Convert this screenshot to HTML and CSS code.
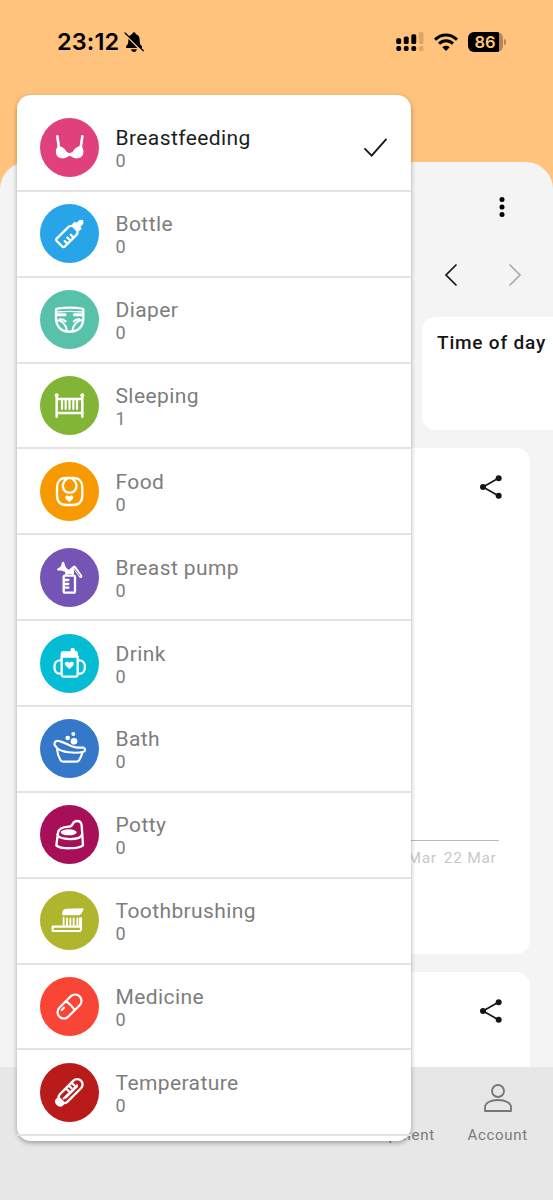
FILE: index.html
```
<!DOCTYPE html>
<html lang="en">
<head>
<meta charset="utf-8">
<title>Statistics</title>
<link rel="stylesheet" href="styles.css">
</head>
<body>
<div class="screen">
  <header class="status">
    <div class="status-left">
      <span class="clock">23:12</span>
      <svg class="bell" viewBox="0 0 60 60"><path fill="#000" d="M30 1c4 0 5 3 5 5 9 3 12 10 12 18 0 12 3 15 7 19v5H6v-5c4-4 7-7 7-19 0-8 3-15 12-18 0-2 1-5 5-5zM21 52h18c-1 5-5 8-9 8s-8-3-9-8z"/><path d="M-1 3 57 61" stroke="#ffc37e" stroke-width="5"/><path d="M3 3 58 56" stroke="#000" stroke-width="4" stroke-linecap="round"/></svg>
    </div>
    <div class="status-right">
      <svg class="signal" viewBox="0 0 84 58"><rect y="19" width="15" height="18" rx="5"/><rect x="23" y="14" width="15" height="23" rx="5"/><rect x="46" y="7" width="15" height="30" rx="5"/><rect y="43" width="15" height="15" rx="6"/><rect x="23" y="43" width="15" height="15" rx="6"/><rect x="46" y="43" width="15" height="15" rx="6"/><g fill="#d9a66b"><rect x="69" width="14" height="37" rx="4"/><rect x="69" y="43" width="14" height="15" rx="5"/></g></svg>
      <svg class="wifi" viewBox="0 0 72 54"><g fill="none" stroke="#000" stroke-width="9"><path d="M3 20C22 1 50 1 69 20"/><path d="M15 32c12-12 30-12 42 0"/></g><path d="M25 43c6-6 16-6 22 0L36 54z"/></svg>
      <div class="battery"><span>86</span></div><i class="battery-tip"></i>
    </div>
  </header>

  <main class="sheet">
    <div class="more"><svg viewBox="0 0 6 20"><circle cx="3" cy="2.5" r="2.5"/><circle cx="3" cy="10" r="2.5"/><circle cx="3" cy="17.5" r="2.5"/></svg></div>
    <div class="pager">
      <svg viewBox="0 0 12 22"><path d="M11 1 1 11l10 10"/></svg>
      <svg class="off" viewBox="0 0 12 22"><path d="m1 1 10 10L1 21"/></svg>
    </div>
    <div class="tabs"><div class="tab">Time of day</div></div>
    <section class="card chart">
      <svg class="share" viewBox="0 0 66 70"><path d="M55 9 9 35l46 26" fill="none" stroke="#151515" stroke-width="5"/><circle cx="56" cy="9" r="9"/><circle cx="9" cy="35" r="9"/><circle cx="56" cy="61" r="9"/></svg>
      <div class="axis"><span>21 Mar</span><span>22 Mar</span></div>
    </section>
    <section class="card next">
      <svg class="share" viewBox="0 0 66 70"><path d="M55 9 9 35l46 26" fill="none" stroke="#151515" stroke-width="5"/><circle cx="56" cy="9" r="9"/><circle cx="9" cy="35" r="9"/><circle cx="56" cy="61" r="9"/></svg>
    </section>
  </main>

  <nav class="nav">
    <div class="nav-item">Development</div>
    <div class="nav-item"><svg viewBox="0 0 84 84"><circle cx="42" cy="21" r="18"/><path d="M3 81V70c0-13 16-22 39-22s39 9 39 22v11z"/></svg>Account</div>
  </nav>

  <div class="menu">
    <div class="row selected">
      <svg class="icon pink" viewBox="0 0 177 177"><path d="M52 55l5 35M127 55l-5 35" stroke-width="8"/><path class="f" d="M54 84c16 0 21 12 28 19 4 3 10 3 14 0 7-7 12-19 28-19 11 12 8 35-10 37-14 2-18-7-25-7s-11 9-25 7c-18-2-21-25-10-37z"/></svg>
      <div class="label"><b>Breastfeeding</b><span>0</span></div>
      <svg class="check" viewBox="0 0 24 20"><path d="m1 11 7 7L23 1"/></svg>
    </div>
    <div class="row">
      <svg class="icon blue" viewBox="0 0 177 177"><g transform="translate(84 94) rotate(45)" stroke-width="7"><path d="M-17 30v-48q0-8 8-12H9q8 4 8 12v48q0 6-6 6h-22q-6 0-6-6zM17-7H5M17 6H3M17 19H5"/><path class="f" d="M-15-44h30v12h-30zM-9-43l1-9q-2-5 2-7l1-2q5-5 10 0l1 2q4 2 2 7l1 9z"/></g></svg>
      <div class="label"><b>Bottle</b><span>0</span></div>
    </div>
    <div class="row">
      <svg class="icon teal" viewBox="0 0 177 177"><path d="M48 59q0-3 4-3 37-6 74 0 4 0 4 3v25c0 26-16 41-41 41S48 110 48 84z" stroke-width="7"/><path d="M50 66q39-4 78 0" stroke-width="4"/><path d="M54 74h21M103 74h21" stroke-width="9"/><path d="M50 90c16 1 27 13 31 32M128 90c-16 1-27 13-31 32M60 88c7-1 13 2 17 6M118 88c-7-1-13 2-17 6" stroke-width="6"/></svg>
      <div class="label"><b>Diaper</b><span>0</span></div>
    </div>
    <div class="row">
      <svg class="icon green" viewBox="0 0 177 177"><path d="M50 58v64M127 58v64M50 69h77M50 111h77" stroke-width="7.500"/><path d="M66 69v30M77 69v30M88.500 69v30M100 69v30M111 69v30" stroke-width="6.500"/><circle class="f" cx="50" cy="58" r="6"/><circle class="f" cx="127" cy="58" r="6"/></svg>
      <div class="label"><b>Sleeping</b><span>1</span></div>
    </div>
    <div class="row">
      <svg class="icon orange" viewBox="0 0 177 177"><path d="M77 48h24c17 0 26 12 26 28v23c0 19-9 30-28 30H79c-19 0-28-11-28-30V76c0-16 9-28 26-28zM82 50c-10 7-14 18-13 25 2 12 9 17 20 17s18-5 20-17c1-7-3-18-13-25" stroke-width="7"/><path class="f" d="M88 121 77 110c-5-9 7-13 11-6 4-7 16-3 11 6z"/></svg>
      <div class="label"><b>Food</b><span>0</span></div>
    </div>
    <div class="row">
      <svg class="icon purple" viewBox="0 0 177 177"><path d="M75 83h26q4 0 4 5v41q0 5-4 5H75q-4 0-4-5V88q0-5 4-5zM72 96h13M72 108h13M72 119h13M79 82V70h19v12" stroke-width="7"/><path class="f" d="M65 44c3-4 7-3 8 0 2 12 7 18 15 22h14v12H78V73c-8-4-16-6-23-5-5-1-4-5-1-7 9-4 11-9 11-17z"/><path d="M89 70 103 58 122 85" stroke-width="10"/><path d="M104 62l16 22" stroke="#7455b5" stroke-width="2.500"/></svg>
      <div class="label"><b>Breast pump</b><span>0</span></div>
    </div>
    <div class="row">
      <svg class="icon cyan" viewBox="0 0 177 177"><path d="M65 68h48v53q0 7-7 7H72q-7 0-7-7zM63 79h-4c-21 0-21 40 0 40h4M115 79h4c21 0 21 40 0 40h-4" stroke-width="7"/><path class="f" d="M62 68V58q0-6 6-6h23l2-9 9-2 3 9q9 1 9 8v10z"/><path class="f" d="M88 106 76 94c-6-10 7-14 12-7 5-7 18-3 12 7z"/></svg>
      <div class="label"><b>Drink</b><span>0</span></div>
    </div>
    <div class="row">
      <svg class="icon azure" viewBox="0 0 177 177"><path d="M44 72c2-6 9-7 16-5 17 3 33 18 53 19h18c6 2 5 10 0 12-23 7-68 2-81-12-4-5-9-9-6-14zM51 90c1 14 6 26 11 34 2 3 4 4 8 4h39c4 0 6-1 8-4 5-8 8-15 10-23" stroke-width="6.500"/><circle class="f" cx="100" cy="45" r="6"/><circle class="f" cx="83" cy="57" r="7"/><circle class="f" cx="102" cy="67" r="10"/></svg>
      <div class="label"><b>Bath</b><span>0</span></div>
    </div>
    <div class="row">
      <svg class="icon berry" viewBox="0 0 177 177"><path d="M49 121 54 83c2-11 16-17 32-18 8 0 10-3 12-8 3-6 7-9 13-9 8 0 13 5 14 13l4 60c-12 11-68 12-80 0zM52 89c6 17 69 18 74 0" stroke-width="7"/><ellipse class="f" cx="86" cy="82" rx="24" ry="9"/></svg>
      <div class="label"><b>Potty</b><span>0</span></div>
    </div>
    <div class="row">
      <svg class="icon olive" viewBox="0 0 177 177"><path d="M38 107h82V82h3v32q0 6-6 6H38z" stroke-width="6.500"/><path d="M71 80v26M81 82v22M91 82v22M101 82v22M112 82v22" stroke-width="5.500"/><path class="f" d="M67 72c-1-9 2-19 12-19l49-1c4 0 4 3 2 5-5 8-6 16-15 16H68z"/></svg>
      <div class="label"><b>Toothbrushing</b><span>0</span></div>
    </div>
    <div class="row">
      <svg class="icon red" viewBox="0 0 177 177"><g transform="translate(88.500 88.500) rotate(45)" stroke-width="6.500"><rect x="-19" y="-43" width="38" height="86" rx="19"/><path d="M-19-2c9-5 29-5 38 0M-9 14v10"/></g></svg>
      <div class="label"><b>Medicine</b><span>0</span></div>
    </div>
    <div class="row">
      <svg class="icon dark" viewBox="0 0 177 177"><g transform="translate(89 87) rotate(45)" stroke-width="7"><path d="M-16 26v-58a16 16 0 0 1 32 0v58q0 7-7 12H-9q-7-5-7-12zM-15-24h10M-15-12h10M-15 0h10"/><path d="M1 27V-30M4-27v47" stroke-width="6"/><path class="f" d="M-11 32h22c8 12 2 23-11 23s-19-11-11-23z"/></g></svg>
      <div class="label"><b>Temperature</b><span>0</span></div>
    </div>
  </div>
</div>
</body>
</html>
```
FILE: styles.css
```
* { box-sizing: border-box; }
body { margin: 0; font-family: Roboto, sans-serif; }
.screen { position: relative; width: 553px; height: 1200px; overflow: hidden; background: #ffc37e; display: flex; flex-direction: column; }
svg { display: block; flex: none; overflow: visible; }

.status { height: 162px; flex: none; padding: 27px 47px 0 57px; display: flex; justify-content: space-between; align-items: flex-start; }
.status-left, .status-right { display: flex; align-items: center; height: 29px; }
.clock { font: 600 23.500px/29px Inter, sans-serif; width: 67px; letter-spacing: 0.1px; }
.bell { width: 20px; height: 20px; }
.signal { width: 28px; height: 19px; margin-right: 10px; }
.wifi { width: 24px; height: 18px; margin-right: 10px; }
.battery { width: 35px; height: 20px; border-radius: 6px; background: linear-gradient(90deg, #000 30.500px, #b18758 30.500px); color: #ffc37e; font: 600 16.500px/20px Inter, sans-serif; padding-left: 6.500px; }
.battery-tip { width: 2px; height: 6px; margin-left: 1px; border-radius: 0 3px 3px 0; background: #b18758; }

.sheet { flex: none; height: 905px; border-radius: 27px 27px 0 0; background: #f4f4f4; overflow: hidden; display: flex; flex-direction: column; }
.more { flex: none; height: 91px; padding: 35px 48px 0 0; display: flex; justify-content: flex-end; }
.more svg { width: 6px; height: 20px; }
.pager { flex: none; height: 64px; padding: 11px 32px 0 0; display: flex; justify-content: flex-end; gap: 52px; }
.pager svg { width: 12px; height: 22px; fill: none; stroke: #151515; stroke-width: 1.700; stroke-linecap: round; }
.pager .off { stroke: #aaa; }
.tabs { flex: none; padding-left: 422px; width: 700px; }
.tab { height: 113px; border-radius: 14px; background: #fff; padding: 14px 0 0 15px; font-size: 19px; font-weight: 500; line-height: 24px; letter-spacing: 0.8px; color: #151515; }
.card { width: 513px; margin: 18px 0 0 17px; background: #fff; border-radius: 14px; flex: none; display: flex; flex-direction: column; align-items: flex-end; }
.chart { height: 506px; }
.next { height: 150px; }
.share { width: 22px; height: 24px; margin: 27px 28px 0 0; fill: #151515; }
.axis { width: 430px; margin: 341px 31px 0 0; border-top: 1px solid #b8b8b8; padding: 7px 2.500px 0 0; display: flex; justify-content: flex-end; gap: 7px; font-size: 15.500px; line-height: 20px; letter-spacing: 0.7px; color: #c9c9c9; }

.nav { flex: none; height: 133px; background: #e7e7e7; display: flex; justify-content: flex-end; }
.nav-item { width: 110.600px; height: 78px; display: flex; flex-direction: column; align-items: center; justify-content: flex-end; font-size: 15px; line-height: 20px; letter-spacing: 0.7px; color: #7b7b7b; }
.nav-item svg { width: 28px; height: 28px; margin-bottom: 13px; fill: none; stroke: #777; stroke-width: 5.500; stroke-linejoin: round; }

.menu { position: absolute; left: 17px; top: 95px; width: 394px; height: 1046px; padding-top: 11px; border-radius: 14px; background: #fff; box-shadow: 0 2px 5px rgba(0,0,0,.32); }
.row { height: 85.860px; border-bottom: 2px solid #e4e4e4; padding: 0 24px 0 22.500px; display: flex; align-items: center; }
.icon { width: 59px; height: 59px; border-radius: 50%; margin-right: 17px; fill: none; stroke: #fff; stroke-linecap: round; stroke-linejoin: round; }
.icon .f { fill: #fff; stroke: none; }
.label { flex: 1; display: flex; flex-direction: column; padding-top: 3px; color: #7d7d7d; }
.label b { font-weight: 400; font-size: 21px; line-height: 24px; letter-spacing: 0.4px; }
.label span { font-size: 18px; line-height: 22px; }
.selected b { color: #1d1d1d; }
.check { width: 23px; height: 20px; margin-top: 1px; fill: none; stroke: #151515; stroke-width: 1.900; stroke-linecap: round; }
.pink { background: #e0407c; }
.blue { background: #27a5e8; }
.teal { background: #57c1aa; }
.green { background: #82b436; }
.orange { background: #f79a00; }
.purple { background: #7455b5; }
.cyan { background: #05bcd5; }
.azure { background: #3577c8; }
.berry { background: #a71059; }
.olive { background: #afb52d; }
.red { background: #f94535; }
.dark { background: #b91b1b; }
```
